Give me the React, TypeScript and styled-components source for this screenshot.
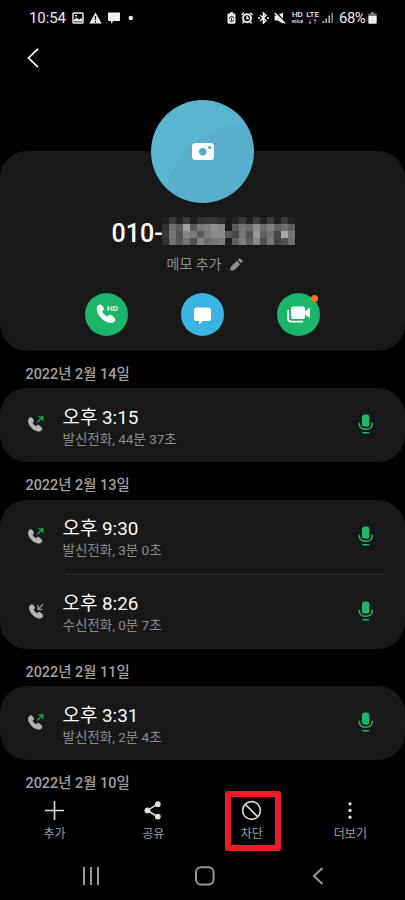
import React from 'react';
import styled, { createGlobalStyle } from 'styled-components';

const GlobalStyle = createGlobalStyle`
  * { box-sizing: border-box; }
  html, body { margin: 0; padding: 0; background: #000; }
  body { font-family: Roboto, 'Noto Sans CJK KR', sans-serif; color: #fff; overflow: hidden; }
  svg { display: block; flex: none; }
`;

const Screen = styled.main`
  width: 405px;
  height: 900px;
  background: #000;
  display: flex;
  flex-direction: column;
  overflow: hidden;
`;

const StatusBar = styled.div`
  height: 35px;
  flex: none;
  display: flex;
  align-items: center;
  justify-content: space-between;
  padding: 0 28px 0 29px;
  color: #ededed;
`;

const StatusGroup = styled.div<{ $gap: number }>`
  display: flex;
  align-items: center;
  gap: ${(p) => p.$gap}px;
`;

const Clock = styled.span`
  font-size: 15px;
  line-height: 18px;
  letter-spacing: -0.1px;
  width: 37px;
`;

const Percent = styled.span`
  font-size: 14.8px;
  line-height: 18px;
  letter-spacing: -0.4px;
  width: 28px;
  padding-top: 1px;
`;

const Network = styled.span`
  display: flex;
  flex-direction: column;
  align-items: center;
  font-size: 8px;
  font-weight: 500;
  line-height: 7px;
`;

const NetworkSub = styled.span`
  font-size: 5px;
  font-weight: 500;
  line-height: 6px;
`;

const TopBar = styled.div`
  height: 65px;
  flex: none;
  padding: 13px 0 0 27px;
`;

const Profile = styled.section`
  height: 200px;
  margin-top: 51px;
  flex: none;
  background: #181818;
  border-radius: 27px;
  display: flex;
  flex-direction: column;
  align-items: center;
`;

const Avatar = styled.div`
  width: 103px;
  height: 103px;
  margin-top: -51px;
  flex: none;
  border-radius: 50%;
  background: radial-gradient(circle at 100px 110px, #58afcd 0, #58afcd 86px, #5ab5d0 89px);
  display: flex;
  align-items: center;
  justify-content: center;
`;

const NumberLine = styled.div`
  height: 28px;
  margin-top: 14px;
  width: 184px;
  display: flex;
  align-items: center;
  flex: none;
`;

const Prefix = styled.span`
  width: 51px;
  font-size: 25px;
  font-weight: 500;
  line-height: 30px;
  padding: 5px 0 0 1px;
  white-space: nowrap;
`;

const Mosaic = styled.div`
  display: grid;
  grid-template-columns: repeat(19, 7px);
  grid-auto-rows: 7px;
`;

const Tile = styled.span<{ $tone: string }>`
  background: ${(p) => '#' + p.$tone + p.$tone + p.$tone};
`;

const Memo = styled.div`
  display: flex;
  align-items: center;
  gap: 8px;
  height: 20px;
  margin-top: 9px;
  padding-left: 4px;
  color: #8d8d8d;
  font-size: 14px;
  line-height: 20px;
`;

const Actions = styled.div`
  display: flex;
  gap: 53px;
  margin-top: 18.5px;
  flex: none;
`;

const Action = styled.button<{ $color: string }>`
  position: relative;
  width: 43px;
  height: 43px;
  border: 0;
  padding: 0;
  border-radius: 50%;
  background: ${(p) => p.$color};
`;

const Badge = styled.span`
  position: absolute;
  top: 2px;
  right: 2px;
  width: 7px;
  height: 7px;
  border-radius: 50%;
  background: #f5761a;
`;

const DateHeading = styled.h2`
  margin: 0;
  height: 37.5px;
  flex: none;
  padding: 5px 0 0 25.5px;
  font-size: 14.4px;
  font-weight: 500;
  line-height: 37.5px;
  color: #a0a0a0;
`;

const CallList = styled.div`
  margin-top: -0.5px;
  flex: none;
  display: flex;
  flex-direction: column;
`;

const CallCard = styled.section`
  background: #181818;
  border-radius: 27px;
  flex: none;
`;

const CallRow = styled.div`
  height: 74px;
  display: flex;
  align-items: center;
  padding: 0 28.5px 0 26px;
`;

const CallText = styled.div`
  margin-left: 16.5px;
  padding-top: 3px;
  flex: 1;
`;

const CallTime = styled.div`
  font-size: 18.9px;
  line-height: 25px;
  color: #fafafa;
  white-space: nowrap;
`;

const CallDetail = styled.div`
  font-size: 13.5px;
  line-height: 19px;
  color: #8a8a8a;
  white-space: nowrap;
`;

const Divider = styled.div`
  height: 1px;
  margin: 0 21px 0 65px;
  background: #303030;
`;

const RowIcon = styled.span`
  padding-bottom: 1.5px;
`;

const Toolbar = styled.nav`
  display: grid;
  grid-template-columns: repeat(4, 98.6px);
  justify-content: center;
  height: 60px;
  margin-top: -6.5px;
  flex: none;
`;

const Tool = styled.button<{ $marked?: boolean }>`
  justify-self: center;
  width: 56px;
  height: 60px;
  margin-left: ${(p) => (p.$marked ? 2 : 0)}px;
  padding: ${(p) => (p.$marked ? '3px 2px 0 0' : '9px 0 0')};
  border: ${(p) => (p.$marked ? '6px solid #ec1c24' : '0')};
  border-radius: 3px;
  background: transparent;
  color: #dedede;
  font: inherit;
  display: flex;
  flex-direction: column;
  align-items: center;
`;

const ToolLabel = styled.span`
  margin-top: 4px;
  font-size: 12px;
  line-height: 18px;
  color: #a0a0a0;
  white-space: nowrap;
`;

const SystemNav = styled.div`
  height: 49px;
  flex: none;
  display: flex;
  align-items: center;
  justify-content: space-between;
  padding: 0 81px 0 82px;
`;

const TONES = [
  '1f 3a 22 3b 1e 30 35 34 2c 1a 24 38 20 38 22 3a 1e 38 24',
  '30 6d 5d a2 5c 79 80 91 89 1c 5c 74 6b 8d 6c 7e 62 70 60',
  '3c 76 52 84 7c 5c 7c 88 88 58 48 76 54 98 60 70 44 a8 74',
  '2e 70 58 72 52 85 6d 74 7d 1d 62 7c 60 86 50 78 42 52 70',
].join(' ').split(' ');

const HANDSET =
  'M4.2 1.4C3 .4 1.3 1 .7 2.6c-.9 2.5.5 6 3.2 8.8s6.300 4.200 8.900 3.300c1.600-.6 2.200-2.300 1.100-3.500l-1.900-1.900c-.8-.8-2-.8-2.800 0l-.8.800c-1.600-.7-3.200-2.300-3.900-3.900l.7-.7c.8-.8.8-2 .1-2.800z';

function ImageIcon() {
  return (
    <svg width="12" height="12" viewBox="0 0 12 12" fill="none">
      <rect x="1" y="1" width="10" height="10" rx=".6" stroke="#eee" strokeWidth="1.4" />
      <path d="M2 9.500V7.500L4.500 5.800 7 7.500 9.500 6 10.500 8V9.500zM3 3h2v1.500H3z" fill="#eee" />
    </svg>
  );
}

function WarningIcon() {
  return (
    <svg width="13" height="12" viewBox="0 0 13 12">
      <path d="M6.500.5 12.700 11.500H.3z" fill="#eee" />
      <path d="M6.500 4v4M6.500 9v1.400" stroke="#000" strokeWidth="1.200" />
    </svg>
  );
}

function SpeechIcon() {
  return (
    <svg width="12" height="12" viewBox="0 0 12 12">
      <path d="M.8.5h10.400q.8 0 .8.8v6.900q0 .8-.8.8H5.500L3 11.800V9H.8Q0 9 0 8.200V1.300Q0 .5.800.5z" fill="#eee" />
    </svg>
  );
}

function SaverIcon() {
  return (
    <svg width="9" height="12" viewBox="0 0 9 12">
      <path d="M3 .3h3v1.200h1.400q1.100 0 1.100 1.100v8q0 1.100-1.100 1.100H1.600Q.5 11.700.5 10.600v-8Q.5 1.500 1.600 1.500H3z" fill="#eee" />
      <path d="M2.300 6.800a2.200 2.200 0 0 1 4.400-.2M6.700 7.600a2.200 2.200 0 0 1-4 .9M4.500 5.800v2.700" stroke="#111" strokeWidth=".9" fill="none" />
    </svg>
  );
}

function AlarmIcon() {
  return (
    <svg width="12" height="12" viewBox="0 0 12 12" fill="none" stroke="#eee">
      <circle cx="6" cy="6.300" r="4" strokeWidth="1.900" />
      <path d="M6 4v2.500h2M.5 3 3 .9M11.500 3 9 .9M2.800 9.600 1.500 11.400M9.200 9.600l1.300 1.800" strokeWidth="1.500" />
    </svg>
  );
}

function BluetoothIcon() {
  return (
    <svg width="11" height="12" viewBox="0 0 11 12" fill="none" stroke="#eee" strokeWidth="1.500">
      <path d="m2.300 3.300 5.700 5.200-2.600 2.500V1L8 3.400 2.300 8.700M0 6h2M9 6h2" />
    </svg>
  );
}

function MuteIcon() {
  return (
    <svg width="12" height="12" viewBox="0 0 12 12">
      <path d="M.6 3.500h3L9 .5v11L3.600 8.500h-3z" fill="#eee" />
      <path d="M2 .5 12 10.600" stroke="#000" strokeWidth="1.300" />
      <path d="M.7.900 11.200 11.400" stroke="#eee" strokeWidth="1.400" />
    </svg>
  );
}

function SignalIcon() {
  return (
    <svg width="12" height="12" viewBox="0 0 12 12">
      <path d="M.5 9h1.600v2H.5zM3.500 6.500h1.600V11H3.500zM6.500 3.500h1.600V11H6.500z" fill="#bbb" />
      <path d="M9.500.8h1.400V11H9.500z" fill="#999" />
    </svg>
  );
}

function BatteryIcon() {
  return (
    <svg width="9" height="12" viewBox="0 0 9 12">
      <path d="M3 0h3v1.500h2q.700 0 .7.700V4H.3V2.200q0-.7.700-.7h2z" fill="#777" />
      <path d="M.3 4h8.400v7q0 .7-.7.700H1q-.7 0-.7-.7z" fill="#eee" />
    </svg>
  );
}

function CameraIcon() {
  return (
    <svg width="22" height="17" viewBox="0 0 22 17">
      <rect width="22" height="17" rx="3.500" fill="#fff" />
      <circle cx="10.800" cy="8.700" r="3.700" fill="#4fabc8" />
      <circle cx="17.600" cy="4.400" r="1.500" fill="#4fabc8" />
    </svg>
  );
}

function PencilIcon() {
  return (
    <svg width="13" height="13" viewBox="0 0 13 13" fill="#8d8d8d">
      <path d="M.2 12.800.8 8.800 6.800 2.800l3.400 3.400-6 6zM7.700 1.900 8.900.7q.8-.8 1.600 0l1.800 1.800q.8.800 0 1.600l-1.200 1.200z" />
    </svg>
  );
}

function CallActionIcon() {
  return (
    <svg width="43" height="43" viewBox="0 0 43 43">
      <path d={HANDSET} transform="translate(11.200 10.400) scale(1.320 1.300)" fill="#fff" />
      <text x="22" y="18" fontFamily="Roboto, sans-serif" fontWeight="500" fontSize="8" fill="#fff">HD</text>
    </svg>
  );
}

function MessageActionIcon() {
  return (
    <svg width="43" height="43" viewBox="0 0 43 43">
      <path d="M15.500 14.500h12q2.500 0 2.500 2.500v8.500q0 2.500-2.500 2.500H22l-3.200 3q-.8.600-.8-.4V28h-2.500Q13 28 13 25.500V17q0-2.500 2.500-2.500z" fill="#fff" />
    </svg>
  );
}

function VideoActionIcon() {
  return (
    <svg width="43" height="43" viewBox="0 0 43 43">
      <rect x="14" y="13.500" width="14" height="12.500" rx="2.200" fill="#fff" />
      <path d="M28 18.500 32 15q1-.7 1 .5v8.700q0 1.200-1 .4L28 21.200z" fill="#fff" />
      <path d="M11.200 17.800v8q0 2.900 2.900 2.900h11.200" fill="none" stroke="#fff" strokeWidth="1.800" strokeLinecap="round" />
    </svg>
  );
}

function CallIcon({ incoming }: { incoming?: boolean }) {
  return (
    <svg width="20" height="20" viewBox="0 0 20 20" fill="none">
      <path d={HANDSET} transform={`translate(${incoming ? 3 : 2} 2.800) scale(.96)`} fill="#b5b2b6" stroke="#b5b2b6" strokeWidth=".8" />
      {incoming ? (
        <path d="m17.200 3.200-5 5M12 4v4.300h4.300" stroke="#a0a0a0" strokeWidth="1.200" />
      ) : (
        <path d="m11.400 8.200 5.200-5.200M12.500 2.800h4.300v4.300" stroke="#25aa50" strokeWidth="1.300" />
      )}
    </svg>
  );
}

function MicIcon() {
  return (
    <svg width="22" height="22" viewBox="0 0 22 22" fill="none">
      <rect x="7" y="1.500" width="7.400" height="12" rx="2.600" fill="#20b36b" />
      <path d="M4.200 10.200c0 4 2.800 6 6.500 6s6.500-2 6.500-6M7.800 19.700h5.800" stroke="#20b36b" strokeWidth="1.500" strokeLinecap="round" />
    </svg>
  );
}

function PlusIcon() {
  return (
    <svg width="21" height="21" viewBox="0 0 21 21" stroke="currentColor" strokeWidth="1.600">
      <path d="M10.500 1v19M1 10.500h19" />
    </svg>
  );
}

function ShareIcon() {
  return (
    <svg width="21" height="21" viewBox="0 0 21 21" fill="currentColor">
      <path d="M14.700 4.100 4.300 10.400l10.400 6.300" fill="none" stroke="currentColor" strokeWidth="1.600" />
      <circle cx="14.800" cy="4.200" r="2.900" />
      <circle cx="4.400" cy="10.400" r="2.900" />
      <circle cx="14.800" cy="16.600" r="2.900" />
    </svg>
  );
}

function BlockIcon() {
  return (
    <svg width="21" height="21" viewBox="0 0 21 21" fill="none" stroke="currentColor" strokeWidth="1.600">
      <circle cx="10.500" cy="10.500" r="8.900" />
      <path d="m4.200 4.200 12.600 12.600" />
    </svg>
  );
}

function MoreIcon() {
  return (
    <svg width="21" height="21" viewBox="0 0 21 21" fill="currentColor">
      <circle cx="10" cy="3.800" r="1.650" />
      <circle cx="10" cy="10.500" r="1.650" />
      <circle cx="10" cy="17.200" r="1.650" />
    </svg>
  );
}

interface Call {
  time: string;
  detail: string;
  incoming?: boolean;
}

const DAYS: { date: string; calls: Call[] }[] = [
  { date: '2022년 2월 14일', calls: [{ time: '오후 3:15', detail: '발신전화, 44분 37초' }] },
  {
    date: '2022년 2월 13일',
    calls: [
      { time: '오후 9:30', detail: '발신전화, 3분 0초' },
      { time: '오후 8:26', detail: '수신전화, 0분 7초', incoming: true },
    ],
  },
  { date: '2022년 2월 11일', calls: [{ time: '오후 3:31', detail: '발신전화, 2분 4초' }] },
];

const TOOLS = [
  { label: '추가', icon: <PlusIcon /> },
  { label: '공유', icon: <ShareIcon /> },
  { label: '차단', icon: <BlockIcon />, marked: true },
  { label: '더보기', icon: <MoreIcon /> },
];

export default function App() {
  return (
    <>
      <GlobalStyle />
      <Screen>
        <StatusBar>
          <StatusGroup $gap={5.5}>
            <Clock>10:54</Clock>
            <ImageIcon />
            <WarningIcon />
            <SpeechIcon />
            <svg width="16" height="6" viewBox="0 0 16 6"><circle cx="5.800" cy="3" r="2.200" fill="#eee" /></svg>
          </StatusGroup>
          <StatusGroup $gap={5}>
            <SaverIcon />
            <AlarmIcon />
            <BluetoothIcon />
            <MuteIcon />
            <StatusGroup $gap={3}>
              <Network>HD<NetworkSub>voice</NetworkSub></Network>
              <Network>LTE<NetworkSub>↓↑</NetworkSub></Network>
              <SignalIcon />
            </StatusGroup>
            <StatusGroup $gap={1}>
              <Percent>68%</Percent>
              <BatteryIcon />
            </StatusGroup>
          </StatusGroup>
        </StatusBar>
        <TopBar>
          <svg width="13" height="20" viewBox="0 0 13 20" fill="none" stroke="#fff" strokeWidth="1.700">
            <path d="M11 .8 1.500 10 11 19.200" />
          </svg>
        </TopBar>
        <Profile>
          <Avatar><CameraIcon /></Avatar>
          <NumberLine>
            <Prefix>010-</Prefix>
            <Mosaic>{TONES.map((tone, i) => <Tile key={i} $tone={tone} />)}</Mosaic>
          </NumberLine>
          <Memo>메모 추가<PencilIcon /></Memo>
          <Actions>
            <Action $color="#1db56c"><CallActionIcon /></Action>
            <Action $color="#3ab4e2"><MessageActionIcon /></Action>
            <Action $color="#1db56c"><VideoActionIcon /><Badge /></Action>
          </Actions>
        </Profile>
        <CallList>
          {DAYS.map((day) => (
            <React.Fragment key={day.date}>
              <DateHeading>{day.date}</DateHeading>
              <CallCard>
                {day.calls.map((call, i) => (
                  <React.Fragment key={call.time}>
                    {i > 0 && <Divider />}
                    <CallRow>
                      <RowIcon><CallIcon incoming={call.incoming} /></RowIcon>
                      <CallText>
                        <CallTime>{call.time}</CallTime>
                        <CallDetail>{call.detail}</CallDetail>
                      </CallText>
                      <RowIcon><MicIcon /></RowIcon>
                    </CallRow>
                  </React.Fragment>
                ))}
              </CallCard>
            </React.Fragment>
          ))}
          <DateHeading>2022년 2월 10일</DateHeading>
        </CallList>
        <Toolbar>
          {TOOLS.map((tool) => (
            <Tool key={tool.label} $marked={tool.marked}>
              {tool.icon}
              <ToolLabel>{tool.label}</ToolLabel>
            </Tool>
          ))}
        </Toolbar>
        <SystemNav>
          <svg width="18" height="18" viewBox="0 0 18 18" stroke="#999" strokeWidth="2">
            <path d="M2 0v18M9 0v18M16 0v18" />
          </svg>
          <svg width="22" height="20" viewBox="0 0 22 20" fill="none" stroke="#999" strokeWidth="2">
            <rect x="1" y="1.200" width="17.600" height="17.200" rx="5" />
          </svg>
          <svg width="12" height="18" viewBox="0 0 12 18" fill="none" stroke="#999" strokeWidth="2">
            <path d="M10.500 1 2 9l8.500 8" />
          </svg>
        </SystemNav>
      </Screen>
    </>
  );
}
